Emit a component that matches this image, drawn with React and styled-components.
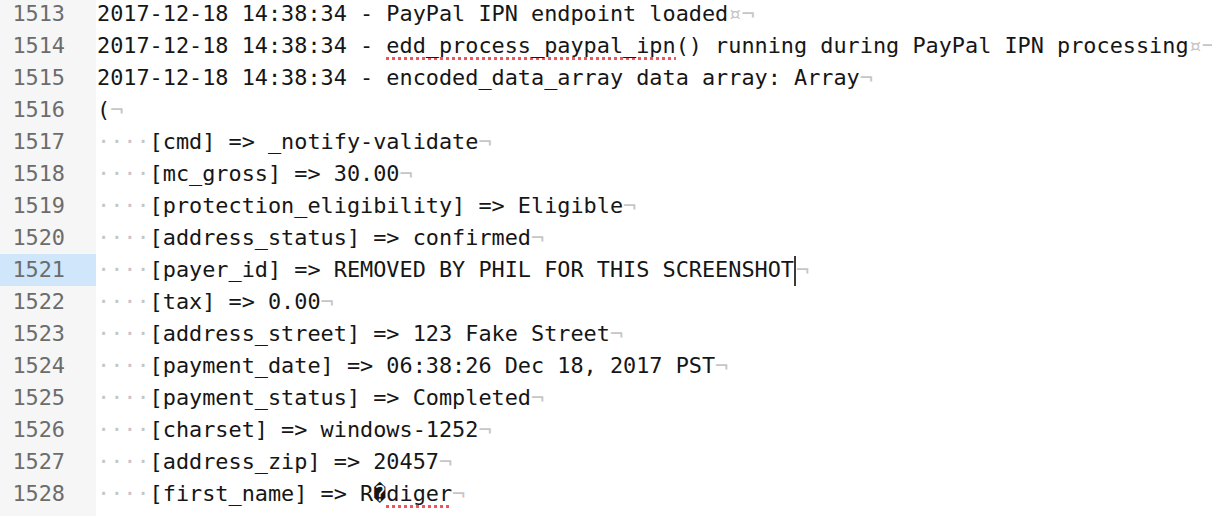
import React from "react";
import styled, { createGlobalStyle } from "styled-components";

const GlobalStyle = createGlobalStyle`
    html, body {
        margin: 0;
        padding: 0;
        background: #ffffff;
    }
`;

// one entry per line; strings are plain text, {spell} marks a misspelled word
const lines = [
    { n: 1513, parts: ["2017-12-18 14:38:34 - PayPal IPN endpoint loaded"], end: "¤¬" },
    { n: 1514, parts: ["2017-12-18 14:38:34 - ", { spell: "edd_process_paypal_ipn" }, "() running during PayPal IPN processing"], end: "¤¬" },
    { n: 1515, parts: ["2017-12-18 14:38:34 - encoded_data_array data array: Array"], end: "¬" },
    { n: 1516, parts: ["("], end: "¬" },
    { n: 1517, indent: 4, parts: ["[cmd] => _notify-validate"], end: "¬" },
    { n: 1518, indent: 4, parts: ["[mc_gross] => 30.00"], end: "¬" },
    { n: 1519, indent: 4, parts: ["[protection_eligibility] => Eligible"], end: "¬" },
    { n: 1520, indent: 4, parts: ["[address_status] => confirmed"], end: "¬" },
    { n: 1521, indent: 4, parts: ["[payer_id] => REMOVED BY PHIL FOR THIS SCREENSHOT"], end: "¬", current: true },
    { n: 1522, indent: 4, parts: ["[tax] => 0.00"], end: "¬" },
    { n: 1523, indent: 4, parts: ["[address_street] => 123 Fake Street"], end: "¬" },
    { n: 1524, indent: 4, parts: ["[payment_date] => 06:38:26 Dec 18, 2017 PST"], end: "¬" },
    { n: 1525, indent: 4, parts: ["[payment_status] => Completed"], end: "¬" },
    { n: 1526, indent: 4, parts: ["[charset] => windows-1252"], end: "¬" },
    { n: 1527, indent: 4, parts: ["[address_zip] => 20457"], end: "¬" },
    { n: 1528, indent: 4, parts: ["[first_name] => R\uFFFD", { spell: "diger" }], end: "¬" },
    { n: 1529, indent: 4, parts: ["[last_name] => Schmidt"], end: "¬" },
];

const App = () => {
    return (
        <>
            <GlobalStyle />
            <Editor>
                <Lines>
                    {lines.map((line) => (
                        <Row key={line.n}>
                            <Gutter $active={line.current}>{line.n}</Gutter>
                            <Code>
                                {line.indent ? <Invisible>{"·".repeat(line.indent)}</Invisible> : null}
                                {line.parts.map((p, i) =>
                                    typeof p === "string" ? (
                                        <React.Fragment key={i}>{p}</React.Fragment>
                                    ) : (
                                        <Misspelled key={i}>{p.spell}</Misspelled>
                                    )
                                )}
                                {line.current && <Caret />}
                                <Invisible>{line.end}</Invisible>
                            </Code>
                        </Row>
                    ))}
                </Lines>
            </Editor>
        </>
    );
};

const Editor = styled.div`
    width: 1212px;
    height: 516px;
    overflow: hidden;
    background: #ffffff;
    font-family: "DejaVu Sans Mono", "Liberation Mono", monospace;
    font-size: 21.85px;
    color: #161616;
`;

const Lines = styled.div`
    display: flex;
    flex-direction: column;
    margin-top: -2px;
`;

const Row = styled.div`
    display: flex;
    height: 32px;
    line-height: 32px;
`;

const Gutter = styled.div`
    flex: 0 0 96px;
    box-sizing: border-box;
    padding-right: 31px;
    text-align: right;
    color: #6c6c6c;
    background: ${(p) => (p.$active ? "#cfe6fb" : "#f6f6f6")};
`;

const Code = styled.div`
    flex: 1;
    padding-left: 1px;
    white-space: pre;
    overflow: hidden;
`;

const Invisible = styled.span`
    color: #c6c6c6;
`;

const Misspelled = styled.span`
    padding-bottom: 2px;
    background-image: repeating-linear-gradient(90deg, #f0555b 0 3px, transparent 3px 6px);
    background-position: left bottom;
    background-size: 100% 3px;
    background-repeat: no-repeat;
`;

const Caret = styled.span`
    display: inline-block;
    width: 0;
    height: 30px;
    border-left: 2px solid #3a3a3a;
    vertical-align: middle;
`;

export default App;
